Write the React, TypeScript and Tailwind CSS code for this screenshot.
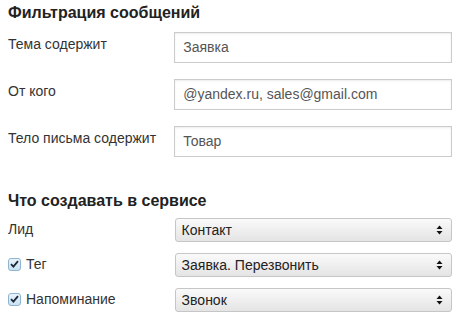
import React from "react";

function Check() {
  return (
    <span className="w-[13px] h-[13px] rounded-[3px] border border-[#8eb4d2] bg-gradient-to-b from-[#eaf4fb] to-[#c9e1f2] flex items-center justify-center shrink-0">
      <svg width="9" height="8" viewBox="0 0 9 8">
        <path d="M1 4.2 L3.4 6.6 L8 1.2" fill="none" stroke="#1e2a3a" strokeWidth="1.8" />
      </svg>
    </span>
  );
}

function Arrows() {
  return (
    <svg width="7" height="10" viewBox="0 0 7 10" className="shrink-0">
      <path d="M3.5 0.5 L6.5 4 L0.5 4 Z" fill="#111" />
      <path d="M3.5 9.5 L6.5 6 L0.5 6 Z" fill="#111" />
    </svg>
  );
}

const fields = [
  { label: "Тема содержит", value: "Заявка" },
  { label: "От кого", value: "@yandex.ru, sales@gmail.com" },
  { label: "Тело письма содержит", value: "Товар" },
];

const selects = [
  { label: "Лид", value: "Контакт", check: false },
  { label: "Тег", value: "Заявка. Перезвонить", check: true },
  { label: "Напоминание", value: "Звонок", check: true },
];

export default function App() {
  return (
    <div className="w-[460px] h-[320px] bg-white px-2 pt-[3px] font-['Liberation_Sans',Arial,sans-serif] text-[14px] text-[#333]">
      <h2 className="text-[16px] leading-[19px] font-bold text-[#222] mb-[10px]">
        Фильтрация сообщений
      </h2>
      <div className="flex flex-col gap-4">
        {fields.map((f) => (
          <div key={f.label} className="flex items-start">
            <div className="w-[167px] pt-[4px] leading-[16px]">{f.label}</div>
            <div className="w-[279px] h-[31px] border border-[#ccc] shadow-[inset_0_1px_2px_rgba(0,0,0,0.08)] px-2 flex items-center text-[#555]">
              {f.value}
            </div>
          </div>
        ))}
      </div>

      <h2 className="text-[16px] leading-[19px] font-bold text-[#222] mt-[34px] mb-[8px]">
        Что создавать в сервисе
      </h2>
      <div className="flex flex-col gap-[11px]">
        {selects.map((s) => (
          <div key={s.label} className="flex items-start">
            <div className="w-[167px] flex items-center gap-[5px] leading-[16px] pt-[3px]">
              {s.check && <Check />}
              <span>{s.label}</span>
            </div>
            <div className="w-[278px] h-[24px] border border-[#c6c6c6] rounded-[3px] bg-gradient-to-b from-[#fafafa] to-[#e4e4e4] pl-[6px] pr-[8px] flex items-center justify-between text-[#222]">
              <span>{s.value}</span>
              <Arrows />
            </div>
          </div>
        ))}
      </div>
    </div>
  );
}
